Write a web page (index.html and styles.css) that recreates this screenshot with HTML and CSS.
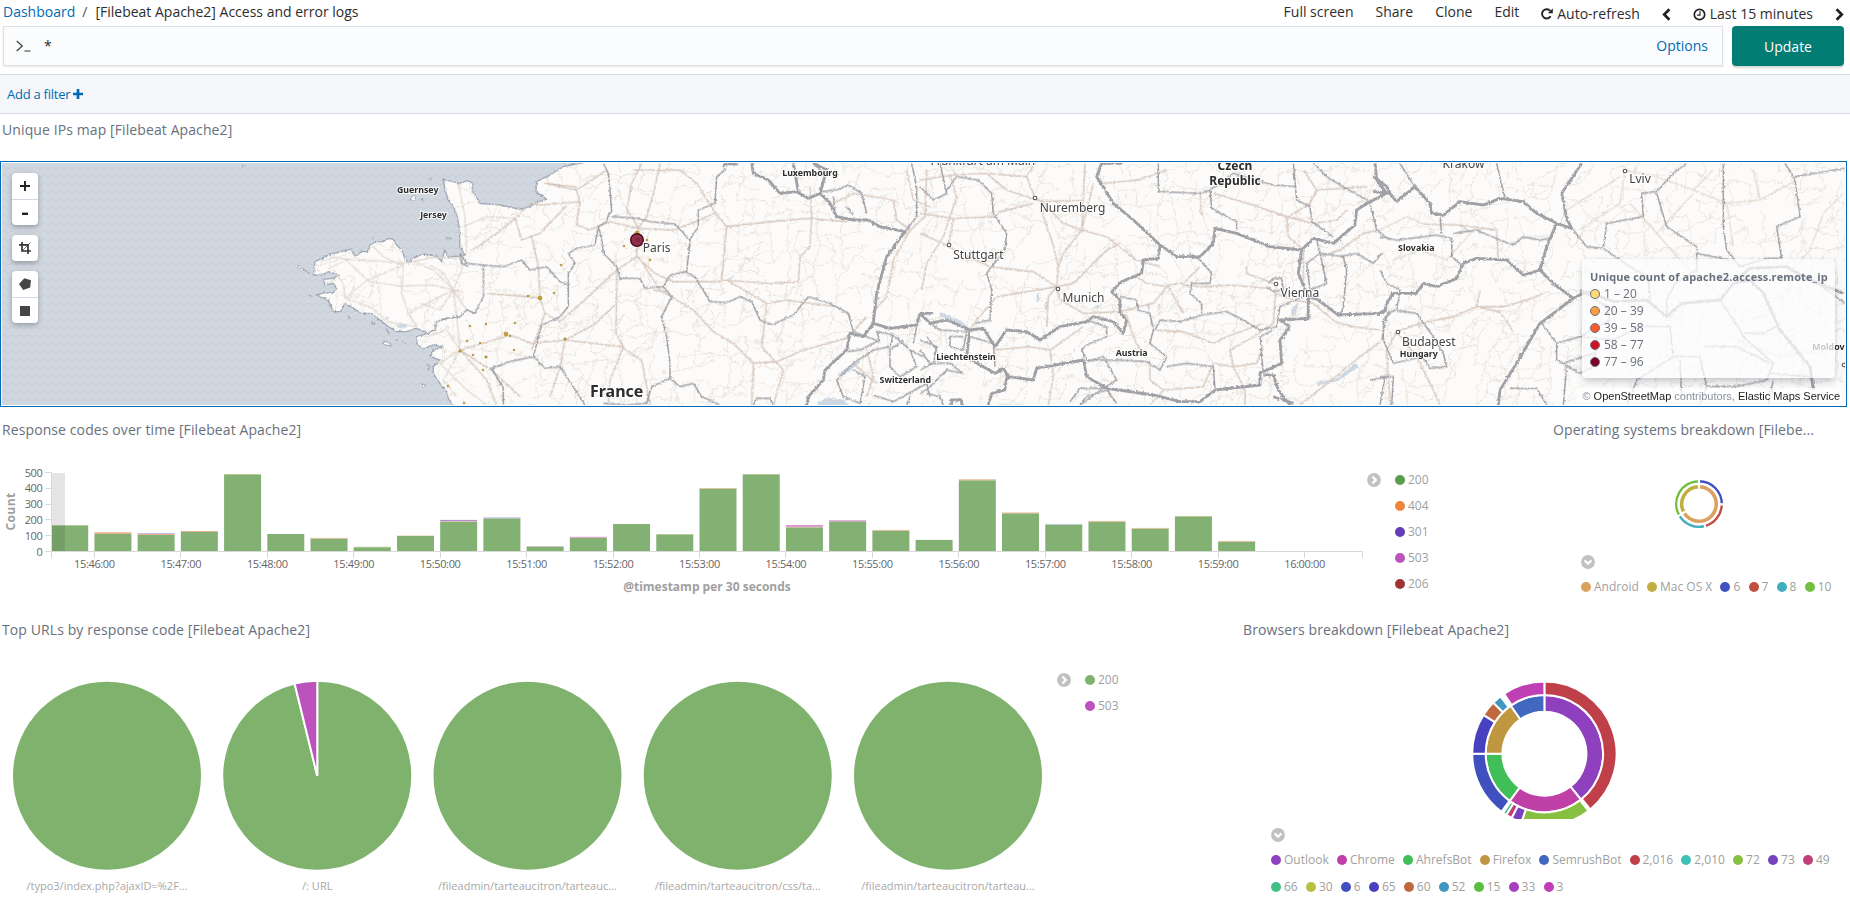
FILE: index.html
```html
<!DOCTYPE html>
<html lang="en">
<head>
<meta charset="utf-8">
<title>[Filebeat Apache2] Access and error logs</title>
<link rel="stylesheet" href="styles.css">
</head>
<body>
<header class="topbar">
  <nav class="crumbs"><a class="link">Dashboard</a><span class="slash">/</span><span>[Filebeat Apache2] Access and error logs</span></nav>
  <nav class="menu">
    <a>Full screen</a><a>Share</a><a>Clone</a><a>Edit</a>
    <a class="with-icon"><svg width="12" height="12" viewBox="0 0 12 12"><path d="M9.6 8.3A4.6 4.6 0 1 1 9.2 2.9" fill="none" stroke="#222" stroke-width="1.9"/><path d="M11.8.4v4.9H6.9z" fill="#222"/></svg>Auto-refresh</a>
    <a class="arrow"><svg width="9" height="13" viewBox="0 0 9 13"><path d="M7.4 1.2 2.2 6.5l5.2 5.3" fill="none" stroke="#222" stroke-width="2.7"/></svg></a>
    <a class="with-icon"><svg width="13" height="13" viewBox="0 0 13 13"><circle cx="6.5" cy="6.5" r="5.2" fill="none" stroke="#222" stroke-width="1.7"/><path d="M7 3.2v3.9H4" fill="none" stroke="#222" stroke-width="1.1"/></svg>Last 15 minutes</a>
    <a class="arrow"><svg width="9" height="13" viewBox="0 0 9 13"><path d="M1.6 1.2l5.2 5.3-5.2 5.3" fill="none" stroke="#222" stroke-width="2.7"/></svg></a>
  </nav>
</header>

<div class="query">
  <div class="query-input">
    <svg width="15" height="12" viewBox="0 0 15 12"><path d="M.7 1l5.6 5-5.6 5M8.5 11h6" fill="none" stroke="#333" stroke-width="1.1"/></svg>
    <span class="query-text">*</span>
    <a class="link options">Options</a>
  </div>
  <button class="update">Update</button>
</div>

<div class="filterbar"><a class="link">Add a filter</a><svg width="10" height="10" viewBox="0 0 10 10"><path d="M5 0v10M0 5h10" stroke="#006bb4" stroke-width="2.7"/></svg></div>

<section class="row row-map">
  <h2>Unique IPs map [Filebeat Apache2]</h2>
  <div class="map-frame"><div class="map">
    <svg class="map-canvas" width="1843" height="242" viewBox="2 163 1843 242">
      <defs>
        <pattern id="waves" width="8" height="8" patternUnits="userSpaceOnUse" x="0" y="5"><path d="M-1 4.2 0 3.6l4-2.2 4 2.2 1 .6" transform="translate(0 .4)" fill="none" stroke="#c8d0d9" stroke-width="1.1"/></pattern>
        <filter id="rough" filterUnits="userSpaceOnUse" x="-200" y="-100" width="6200" height="1100">
          <feTurbulence type="fractalNoise" baseFrequency=".13" numOctaves="3" seed="4"/>
          <feDisplacementMap in="SourceGraphic" scale="9" xChannelSelector="R" yChannelSelector="G"/>
        </filter>
        <path id="coast" d="M1750 38L1690 50 1650 75 1610 95 1608 125 1640 148 1615 155 1590 170 1560 178 1500 165 1440 160 1428 140 1415 120 1420 100 1400 92 1380 100 1330 88 1335 120 1345 150 1362 175 1372 200 1378 235 1380 290 1395 315 1375 318 1345 322 1335 300 1325 335 1310 318 1270 312 1240 325 1225 338 1215 325 1205 300 1190 285 1180 268 1165 265 1150 275 1130 275 1110 285 1105 305 1085 305 1065 320 1055 298 1040 300 1000 310 975 320 945 335 940 375 965 375 985 365 1015 375 1000 385 970 388 975 405 1000 400 1010 415 1000 428 975 428 950 435 985 450 1000 485 1022 485 1035 460 1060 475 1085 490 1115 490 1140 510 1165 530 1190 545 1220 545 1250 535 1285 550 1250 560 1250 580 1270 597 1300 585 1330 590 1300 600 1290 620 1320 630 1300 650 1300 670 1320 700 1340 725 1345 745 1370 780H5700V20H1800Z"/>
        <clipPath id="land"><use href="#coast" transform="translate(0 150) scale(.33333)"/></clipPath>
      </defs>
      <rect x="2" y="163" width="1843" height="242" fill="#d0d7df"/>
      <rect x="2" y="163" width="1843" height="242" fill="url(#waves)"/>
      <g transform="translate(0 150) scale(.33333)" filter="url(#rough)">
        <use href="#coast" fill="#fcfbfa" stroke="#9fa8b5" stroke-width="4"/>
        <g fill="#fcfbfa" stroke="#9fa8b5" stroke-width="3">
          <path d="M1230 148l10-12 10 4-8 12zM1286 86l10-2-4 8zM1266 146l8 2-4 6zM1338 263l14 2-10 3zM892 350l8-4 6 6-8 4zM910 358l20 14-8-8zM928 436h5v3h-5zM1044 500l10 3-8 2zM1114 516l12 6-8 3zM1148 572l20 6 6 10-22-4zM1160 535l8 16-6-4zM1184 566l8 6zM1206 574l8 6zM1280 642l10 6-3 14zM1264 702l14 3-8 5zM1114 262l6 2zM726 46l8 0-6 6z"/>
        </g>
      </g>
      <g clip-path="url(#land)"><g filter="url(#rough)"><path id="minor" fill="none" stroke="#e9e3db" stroke-width=".9"/></g></g>
      <g class="water" filter="url(#rough)" fill="#cfd8e1" transform="translate(0 150) scale(.33333)">
        <path d="M1190 528l14-8 18 4-6 12-20-2zM1358 626l10-3-2 10zM1156 498l10 4-2 8zM2235 322l18 1-2 6-14 0zM2180 390l20-14 4 3-20 14zM2455 755l30-12 45 6 20 18h-98zM2515 670l60-40 6 6-40 34-26 12zM2818 485l60 25 35 28-8 12-30-25-55-26zM3110 430h8l-2 26h-6zM3135 460l10-14-2 30-8 4zM3280 470l24-8-8 12zM3440 465l10-5-3 28zM3475 465l6 0-2 16zM3505 295l18 8-2 6zM3878 470l18-12-10 36-12 4 0-14zM3950 698l60-12 58-48 8 14-64 42-60 12zM4252 530l12-10-6 16z"/>
      </g>

      <!-- main roads -->
      <g class="roads" transform="translate(0 150) scale(.33333)" filter="url(#rough)">
        <g class="faint">
          <path d="M960 335L1005 322 1060 330 1130 332 1210 340 1300 322 1380 325M985 355L1040 330 1080 370 1110 395 1200 408 1300 405 1360 420M1035 445L1030 400 1000 360M1035 445L1110 470 1165 515 1250 530M1035 445L1100 392 1210 345 1205 430 1225 490 1250 530M1120 290L1150 320 1205 345M1360 420L1300 360 1240 335M1360 420L1330 370 1290 345M1360 420L1385 360 1385 300M1360 420L1300 450 1220 495M1360 420L1370 500 1380 600M1360 420L1400 480M1360 420L1320 480 1260 460"/>
          <path d="M1380 600L1340 540 1280 560M1380 600L1320 640 1400 720 1460 765M1380 600L1330 690 1370 740M1375 100L1395 200 1400 310M1390 230L1460 200 1545 205"/>
        </g>
        <g transform="translate(1380)">
          <path d="M0 425L-20 420M535 235L515 200 500 180 515 100 545 40M535 235L560 200 580 130 600 40M535 235L450 215 390 240 350 225 360 155 345 110 255 100 350 120 440 60M360 155L300 160 240 165 210 160 165 205 110 250 40 300M165 205L185 270 240 250 320 165M535 235L640 240 710 215 765 188 710 100 660 60 520 60M765 188L800 230 930 215 1050 205 1160 215M800 230L785 390 930 400 1015 395 1020 320 1050 290 1055 200 1050 110M535 235L530 320 585 370 640 395 785 395M530 320L470 360 385 440 300 515 255 490 240 445 205 440 80 430M470 360L468 550 495 600 545 630 570 765M535 320L600 420 700 480 760 545 820 580 880 640 875 765M465 465L400 525 315 570 215 580 150 555 0 600M315 570L300 650 270 740M315 570L490 590 450 690 445 765M240 445L235 350 215 260M0 600L100 665 180 740M0 600L80 690 110 765M255 490L215 600M920 460L905 590 970 660 940 765M870 640L950 635 1030 600 1160 565 1220 500M580 420L620 425M1235 490L1280 440 1300 330 1350 240 1395 200 1400 60M1350 240L1310 210 1300 150 1180 130 1120 160M800 390L920 460 980 450 1130 470M1340 60L1360 150 1410 170M1220 600L1240 680 1220 740M1180 640L1250 700"/>
        </g>
        <g transform="translate(2760)">
          <path d="M0 90L90 75 200 70 320 80 345 145 365 155 490 150 495 40M345 40L320 80M90 75L110 140 70 260 20 340 5 420M0 190L100 205 225 200 240 185 340 160M100 205L85 290M200 70L260 120 350 150M365 155L370 200 395 270 415 350 410 410M365 155L430 220 485 240 490 150M485 240L520 100M485 240L560 260 650 330 720 350M485 240L430 310 415 350M410 410L340 365 210 350 85 290M410 410L230 440 170 510 150 540M410 410L420 450 490 490 595 485 620 500 640 560 660 600M410 410L460 400 560 300 600 280M410 410L385 440 380 530M545 100L655 90 740 60M595 485L640 475 700 460 745 405 790 400 840 350M640 375L680 400 745 410 790 490M790 405L850 410 930 405 1050 415M1060 400L980 370 980 350M1068 410L1060 520 1000 560 930 600 940 650 1010 640 1030 590M1068 430L1120 450 1180 460 1245 515 1300 530 1380 540M700 540L790 545 880 580 920 560 1030 520M690 640L690 690 730 720 850 710 880 640 940 650 975 720 975 765M730 720L690 765M845 195L840 130M880 130L1000 165 1100 200 1180 220 1250 210 1280 180M1100 200L1105 260 1150 300 1150 400M1105 200L1170 160 1190 120 1340 110M1190 120L1150 60M1380 240L1330 250 1260 300 1200 320M220 600L330 590 390 600 400 680 385 765M390 600L490 530M1380 575L1320 620 1210 710 1140 765M0 250L90 290"/>
        </g>
        <g transform="translate(4140)">
          <path d="M50 545L120 520 220 500 290 470 360 485 400 545M290 470L300 420M290 470L370 470 440 450 490 430M50 545L20 600 30 765M50 545L110 620 160 720 180 765M130 222L240 225 350 240 355 330M240 225L270 245"/>
          <g class="faint"><path d="M735 60L720 160 600 240M735 60L830 80 940 120 1000 60M940 120L1040 160 1140 150 1250 90M1140 150L1120 60M830 250L750 160M830 250L940 130M830 250L900 330 1000 420M1330 190L1290 300 1200 400M1330 190L1390 130M0 240L80 200 130 222M40 330L120 300 200 330 280 240M720 80L560 180 540 220M1050 560L1200 620 1360 600M1040 160L1060 290"/></g>
        </g>
      </g>

      <!-- regional borders -->
      <g class="region" transform="translate(0 150) scale(.33333)" filter="url(#rough)">
        <path d="M1380 318L1385 340 1405 350M1280 550L1305 540 1310 515 1340 505 1380 500 1400 480 1425 490 1450 440 1450 345"/>
        <g transform="translate(1380)">
          <path d="M0 310L20 340 70 345 130 350 185 330 210 360 260 350 300 395 325 405 325 370 345 340 325 310 350 295 405 285 415 230 440 215 445 195 455 185 450 120 445 70 430 40M455 200L530 205 570 215 645 222 690 270 685 320 680 365 630 375 610 410 555 415 540 385 480 385 470 350 430 310 425 265 415 230M690 268L715 230 715 180 765 160 770 80 795 60 790 40M680 368L705 380 750 455 800 458 840 440 875 455 900 510 935 525 1000 495 1045 440 1110 460 1165 490 1180 545M325 400L325 470 300 500 245 525 220 620 150 635 95 655 130 715 130 765M220 620L255 655 300 650 340 710 375 765M610 410L635 440 605 500 620 560 630 640 630 685 575 710 560 760 500 765 430 760M630 685L660 710 700 700 725 740 760 755 780 765M880 765L890 745 930 745 940 765M1085 125L1130 120 1165 105 1205 130 1220 190M1125 180L1120 140M1180 195L1160 170M1355 40L1370 110 1370 200 1335 245M1060 40L1100 80"/>
          <path d="M1180 545L1260 575 1250 545 1300 555 1290 590 1240 600 1180 640 1130 690 1150 740 1200 760 1215 680 1180 660M1300 555L1350 600 1370 650 1320 680 1290 650 1290 600 1330 570M1350 600L1390 620M1370 530L1360 580M1240 735L1300 755 1400 700 1410 740M1340 765L1350 740M1260 570L1200 600 1160 605"/>
        </g>
        <g transform="translate(2760)">
          <path d="M60 40L80 130 40 150 0 110M80 120L110 80 175 90 215 130 220 190 260 250 255 300 215 350 200 370 215 420 210 510 165 520M715 40L715 125 840 130 870 120 875 175 950 215 950 240M1120 40L1130 150 1170 170 1175 215 1240 260M870 120L940 70 1060 105 1130 110M1180 40L1220 80 1270 110 1350 155M810 310L840 330 875 370 870 400 815 400 810 430 845 460 845 495 920 485 960 505 1020 540 1070 530 1080 470 1150 440M600 440L650 450 655 480 690 490 700 540 690 580 740 620 720 660 680 635 600 630 500 630 485 600 500 585 560 560 560 530 500 510M705 540L720 510 780 515 845 495M740 650L800 640 880 650 885 715M500 635L550 620 590 690 550 715 480 715 450 755M550 715L480 765M1190 270L1200 310 1270 320 1280 360 1270 470 1260 495M1200 310L1220 400 1170 420 1160 340 1200 310M1260 320L1310 310 1360 340 1385 310M1350 160L1370 240 1410 270M1380 765L1395 680M1385 570L1400 500"/>
          <path d="M30 520L60 540 140 545 130 600 90 590 90 560 130 560M0 570L50 590 40 640 0 660M0 600L30 640 90 640 130 670 80 660 20 720 0 730M150 560L220 580 225 650M20 560L50 600M1045 400L1060 385 1085 385 1090 420 1060 425 1040 410M1030 670L1020 560 1060 540M1350 690L1410 680M480 765L500 740 560 720 590 760M20 730L60 740 70 765"/>
        </g>
        <g transform="translate(4140)">
          <path d="M60 40L110 120M350 40L375 145M180 200L185 250M0 260L50 270 170 255 215 265 215 320 245 345M220 250L290 240 360 270 400 285 430 260 480 270 510 265M0 360L20 400 60 420 50 480 20 490M40 480L110 490 160 560 190 610 200 650 150 655 130 620 40 640 10 570 10 510 30 490M0 680L40 680 35 765M580 240L620 290 670 295 750 350 805 380 810 450M670 295L680 220 790 200 785 130 830 125 880 70 920 40M830 130L860 230 950 290 950 360 885 400 860 450 860 500M1030 40L1030 230 1040 300 1080 350 1160 325 1205 325 1190 230 1260 200 1245 90 1215 40M1245 80L1395 55M950 310L1050 330M600 420L680 470 690 510 600 560 700 570 740 550 770 530 870 530 880 620 770 690 740 765M485 520L530 580 600 560M530 580L530 630 600 670 640 650 650 570M390 715L470 715 500 765M560 650L550 765M880 620L960 620 980 710 1070 710 1160 690 1180 640 1090 560 1080 540 1020 450M970 590L1070 590 1170 640M1095 550L1150 550 1190 530M900 630L905 740M980 710L960 765M1180 690L1165 765M1170 670L1290 680M640 610L550 640M1300 390L1395 460"/>
        </g>
      </g>

      <!-- national borders -->
      <g class="nation" transform="translate(0 150) scale(.33333)" filter="url(#rough)">
        <g transform="translate(1380)">
          <path d="M790 42H835M875 40L880 70 925 90 960 130 1010 125 1045 145 1080 130 1110 160 1130 200 1180 210 1225 210 1260 230 1335 245 1280 320 1250 430 1240 520 1210 560 1170 550 1160 600 1095 660 1090 690 1045 740 1040 765M1000 40L1015 125M1080 130L1100 60 1060 40M1240 520L1290 535 1370 525 1380 490 1420 490"/>
        </g>
        <g transform="translate(2760)">
          <path d="M0 490L30 520 80 510 150 540 190 535 225 590 260 540 320 545 360 570 420 530 500 515 520 500 580 515 610 550 620 510 600 490 600 450 575 425 605 395 665 370 670 330 715 325 720 285 770 320 840 320 880 280 885 235 950 250 1050 290 1145 300 1180 265 1240 280 1305 225 1310 180 1350 155 1400 130 1370 90 1365 40M605 40H545L530 80 580 160 640 210 720 285M1145 300L1135 370 1165 440 1165 505 1080 510 1110 530 1080 570 1085 640 1020 670 1020 705 885 720 840 755 780 755 700 735 560 715 500 680 490 630 350 655 340 690 265 680 250 655 225 670 180 645 140 620 150 540M1165 440L1195 450 1255 495 1380 490 1400 480M1030 675L1060 675 1075 720 1110 765M260 680L255 720 215 730 205 765M95 765V750H125V765M1060 740L1120 760"/>
        </g>
        <g transform="translate(4140)">
          <path d="M-20 125L30 130 50 155 105 110 150 160 155 190 190 195 240 155 310 165 360 145 430 155 470 190 530 220 575 235 560 205 545 130 605 40M530 220L500 290 480 360 430 375 380 330 290 325 250 340 230 385 170 410 130 400 110 430 40 430 20 460 15 480-10 495M480 360L520 400 580 445 620 425 700 455 800 450 860 500 905 460 1020 450 1060 400 1110 390 1150 430 1200 540 1290 650 1300 720M580 445L520 490 480 520 410 640 360 720 355 765M1080 380L1110 355 1220 350 1290 390 1340 410 1390 430M-20 80L20 110 30 130"/>
        </g>
      </g>

      <g id="dots" fill="#c79f31" stroke="#a8822a" stroke-width=".5"></g>
      <circle cx="637" cy="240" r="6.3" fill="#93304b" stroke="#4c0a1c" stroke-width="1.4"/><circle cx="637.7" cy="240" r="1.8" fill="none" stroke="#6d1830" stroke-width=".8"/>
      <g id="cities" fill="#fff" stroke="#555" stroke-width="1.1"></g>

      <g class="city">
        <text x="642.7" y="252.3">Paris</text><text x="1039.7" y="211.7">Nuremberg</text><text x="953.2" y="258.6">Stuttgart</text><text x="1062.5" y="302">Munich</text><text x="1280.6" y="297">Vienna</text><text x="930.5" y="165">Frankfurt am Main</text><text x="1442.6" y="168.3">Krakow</text><text x="1629.2" y="183.4">Lviv</text><text x="1402" y="346">Budapest</text>
      </g>
      <g class="country">
        <text x="417.7" y="192.8">Guernsey</text><text x="433.5" y="218.4">Jersey</text><text x="810" y="176">Luxembourg</text><text x="905.3" y="382.7">Switzerland</text><text x="966" y="359.6">Liechtenstein</text><text x="1131.7" y="355.7">Austria</text><text x="1416.3" y="251">Slovakia</text><text x="1418.8" y="357">Hungary</text><text x="1831" y="349.8">Moldova</text>
        <text x="1235" y="170" class="mid">Czech</text><text x="1235" y="184.8" class="mid">Republic</text><text x="616.7" y="397.2" class="big">France</text>
      </g>
    </svg>

    <div class="map-tools">
      <div class="tool-group"><span class="tool"><svg width="10" height="10" viewBox="0 0 10 10"><path d="M5 0v10M0 5h10" stroke="#222" stroke-width="1.9"/></svg></span><span class="tool"><svg width="8" height="8" viewBox="0 0 8 8"><path d="M1 4.8h6" stroke="#222" stroke-width="2.4"/></svg></span></div>
      <div class="tool-group"><span class="tool"><svg width="12" height="12" viewBox="0 0 12 12"><path d="M3 0v9h9M0 2.8h9V12" fill="none" stroke="#333" stroke-width="1.7"/><path d="M3 9l8.5-8.5" stroke="#333" stroke-width=".7"/></svg></span></div>
      <div class="tool-group"><span class="tool"><svg width="12" height="12" viewBox="0 0 12 12"><path d="M5.3.2 12 2.3 11.2 9.4 4.2 12 0 6z" fill="#464646"/></svg></span><span class="tool"><svg width="10" height="10" viewBox="0 0 10 10"><path d="M0 0h10v10H0z" fill="#464646"/></svg></span></div>
    </div>
    <div class="map-legend">
      <b>Unique count of apache2.access.remote_ip</b>
      <div><i class="l1"></i>1 – 20</div><div><i class="l2"></i>20 – 39</div><div><i class="l3"></i>39 – 58</div><div><i class="l4"></i>58 – 77</div><div><i class="l5"></i>77 – 96</div>
    </div>
    <div class="attribution">© <a>OpenStreetMap</a> contributors, <a>Elastic Maps Service</a></div>
  </div></div>
</section>

<section class="row row-mid">
  <div class="panel panel-hist">
    <h2>Response codes over time [Filebeat Apache2]</h2>
    <div class="side-body">
      <svg id="hist" class="chart" width="1366" height="170" viewBox="0 445 1366 170"></svg>
      <span class="toggle right"></span>
      <ul class="legend vertical" data-items="200:#5c9c50|404:#ef843c|301:#663db8|503:#bc52bc|206:#9e3533"></ul>
    </div>
  </div>
  <div class="panel panel-os">
    <h2>Operating systems breakdown [Filebe...</h2>
    <svg id="os" class="chart" width="299" height="106" viewBox="1551 445 299 106"></svg>
    <span class="toggle down"></span>
    <ul class="legend" data-items="Android:#daa05d|Mac OS X:#bfaf40|6:#4050bf|7:#bf4f40|8:#40afbf|10:#70bf40"></ul>
  </div>
</section>

<section class="row row-bottom">
  <div class="panel panel-urls">
    <h2>Top URLs by response code [Filebeat Apache2]</h2>
    <div class="side-body">
      <svg id="pies" class="chart" width="1056" height="255" viewBox="0 645 1056 255"></svg>
      <span class="toggle right"></span>
      <ul class="legend vertical" data-items="200:#7eb26d|503:#bc52bc"></ul>
    </div>
  </div>
  <div class="panel panel-browsers">
    <h2>Browsers breakdown [Filebeat Apache2]</h2>
    <svg id="browsers" class="chart" width="607" height="174" viewBox="1243 645 607 174"></svg>
    <span class="toggle down"></span>
    <ul class="legend" data-items="Outlook:#8f40bf|Chrome:#bf40a7|AhrefsBot:#40bf58|Firefox:#bf9740|SemrushBot:#4068bf|2,016:#bf4048|2,010:#40bfb7|72:#87bf40|73:#7840bf|49:#bf4078"></ul>
    <ul class="legend" data-items="66:#40bf87|30:#b7bf40|6:#4050bf|65:#4840bf|60:#bf6840|52:#4097bf|15:#58bf40|33:#a740bf|3:#bf40b4"></ul>
  </div>
</section>
<script src="script.js"></script>
</body>
</html>
```
FILE: styles.css
```css
* { box-sizing: border-box; }
body { margin: 0; width: 1850px; height: 900px; overflow: hidden; background: #fff; color: #2d2d2d; font: 14px/20px "Open Sans", sans-serif; }
.link { color: #006bb4; }
h2 { margin: 0; padding-left: 2px; height: 30px; font-size: 14px; font-weight: 400; line-height: 30px; color: #69707d; letter-spacing: .1px; }

.topbar { display: flex; justify-content: space-between; height: 26px; padding: 2px 6px 0 3px; }
.slash { margin: 0 8px 0 7px; color: #555; }
.menu { display: flex; gap: 22px; }
.with-icon { display: flex; align-items: center; gap: 4px; }
.arrow { display: flex; align-items: center; }

.query { display: flex; gap: 9px; height: 48px; padding: 0 6px 8px 3px; }
.query-input { display: flex; flex: 1; align-items: center; padding: 0 14px 0 12px; border: 1px solid #dde0e4; background: #fbfcfd; box-shadow: 0 1px 2px rgba(0, 0, 0, .1); }
.query-text { flex: 1; margin-left: 13px; }
.update { width: 112px; height: 40px; border: 0; border-radius: 4px; background: #017d73; color: #fff; font: 14px "Open Sans", sans-serif; box-shadow: 0 2px 2px rgba(0, 0, 0, .15); }

.filterbar { display: flex; align-items: center; gap: 3px; height: 40px; padding-left: 7px; border-top: 1px solid #d3dae6; border-bottom: 1px solid #d3dae6; background: #f5f7fa; font-size: 13px; letter-spacing: -.25px; }

.row-map { height: 301px; padding-top: 1px; }
.row-map h2 { height: 46px; }
.map-frame { width: 1847px; height: 246px; padding: 1px; border: 1px solid #006bb4; }
.map { position: relative; height: 242px; overflow: hidden; }
.map-canvas { display: block; }
.roads { fill: none; stroke: #d3c3b9; stroke-width: 4; }
.faint { stroke: #ded6cd; stroke-width: 3.5; }
.region { fill: none; stroke: #a2a3a9; stroke-width: 4.5; }
.nation { fill: none; stroke: #a0a1a6; stroke-width: 8.5; stroke-linejoin: round; }
.city, .country { font-family: "Noto Sans", sans-serif; fill: #444; stroke: #fff; stroke-width: 2px; stroke-opacity: .85; paint-order: stroke; }
.city { font-size: 12px; }
.country { font-size: 8.8px; font-weight: 700; text-anchor: middle; fill: #2c2c2c; }
.country .mid { font-size: 12px; }
.country .big { font-size: 16px; }

.map-tools { position: absolute; left: 10px; top: 10px; display: flex; flex-direction: column; gap: 10px; }
.tool-group { border-radius: 4px; background: #fff; box-shadow: 0 2px 5px rgba(50, 60, 75, .4); }
.tool { display: flex; align-items: center; justify-content: center; width: 26px; height: 26px; }
.tool + .tool { border-top: 1px solid #d3dae6; }

.map-legend { position: absolute; left: 1580px; top: 96px; width: 253px; height: 119px; padding: 9px 8px; border-radius: 4px; background: rgba(252, 252, 253, .75); box-shadow: 0 5px 8px -2px rgba(70, 80, 95, .3), 0 0 4px rgba(70, 80, 95, .1); color: #69707d; font-size: 12px; line-height: 17.1px; }
.map-legend b { display: block; font-size: 11px; letter-spacing: .1px; white-space: nowrap; }
.map-legend div { display: flex; align-items: center; gap: 4px; height: 17.1px; }
.map-legend i { width: 10px; height: 10px; border: 1px solid; border-radius: 50%; }
.l1 { background: #fed976; border-color: #cba43c; }
.l2 { background: #feab49; background: #fd9d43; border-color: #c0680f; }
.l3 { background: #fc5b2e; border-color: #b92005; }
.l4 { background: #d41020; border-color: #900915; }
.l5 { background: #800026; border-color: #4d0017; }
.attribution { position: absolute; right: 0; bottom: 0; padding: 0 5px; background: rgba(255, 255, 255, .75); color: #8a919e; font: 11px/17px "Liberation Sans", sans-serif; }
.attribution a { color: #222; }

.row-mid, .row-bottom { display: flex; }
.row-mid { height: 200px; }
.row-bottom { height: 285px; }
.panel-hist { width: 1551px; }
.panel-os { width: 299px; }
.panel-urls { width: 1241px; }
.panel-browsers { width: 609px; }
.chart { display: block; }
.side-body { display: flex; align-items: flex-start; }
.side-body .toggle { margin: 28px 14px 0 1px; }
.side-body .legend { margin-top: 22px; }
.toggle { display: block; }
.toggle svg { display: block; }
.legend { display: flex; gap: 8.2px; margin: 0; padding: 0; list-style: none; color: #a0a0a0; font-size: 12px; line-height: 26px; }
.legend.vertical { flex-direction: column; gap: 0; }
.legend li { display: flex; align-items: center; white-space: nowrap; }
.swatch { width: 10px; height: 10px; margin-right: 3px; border-radius: 50%; }
.panel-os .toggle { margin: 4px 0 0 30px; }
.panel-os .legend { margin: 5px 0 0 30px; }
.panel-browsers { padding-left: 2px; }
.panel-browsers h2 { padding-left: 0; }
.panel-browsers .toggle { margin: 9px 0 0 28px; }
.panel-browsers .legend { margin: 5px 0 0 28px; }
.panel-browsers .legend + .legend { margin-top: 1px; }

.axis { stroke: #d9d9d9; fill: none; }
.tick { font: 11px "Open Sans", sans-serif; fill: #848484; }
.tick.dark { fill: #666; letter-spacing: -.35px; }
.title { font: 700 12px "Open Sans", sans-serif; fill: #a0a0a0; text-anchor: middle; }
.pie-label { font: 11px "Open Sans", sans-serif; fill: #a8a8a8; text-anchor: middle; }
```
FILE: script.js
```js
const $ = (id) => document.getElementById(id);

// Legends and their collapse toggles
document.querySelectorAll('.legend').forEach((ul) => {
  ul.innerHTML = ul.dataset.items.split('|').map((item) => {
    const [label, color] = item.split(':');
    return `<li><span class="swatch" style="background:${color}"></span>${label}</li>`;
  }).join('');
});
document.querySelectorAll('.toggle').forEach((t) => {
  const d = t.classList.contains('right') ? 'M5.4 3.6 8.8 7l-3.4 3.4' : 'M3.6 5.4 7 8.8l3.4-3.4';
  t.innerHTML = `<svg width="14" height="14" viewBox="0 0 14 14"><circle cx="7" cy="7" r="6.9" fill="#c1c1c1"/><path d="${d}" fill="none" stroke="#fff" stroke-width="2.2"/></svg>`;
});

// Ring segment between two angles, clockwise from twelve o'clock
function arc(cx, cy, r0, r1, a0, a1, fill, gap) {
  const p = (r, a) => {
    const t = (a - 90) * Math.PI / 180;
    return `${(cx + r * Math.cos(t)).toFixed(2)} ${(cy + r * Math.sin(t)).toFixed(2)}`;
  };
  const big = a1 - a0 > 180 ? 1 : 0;
  return `<path d="M${p(r1, a0)}A${r1} ${r1} 0 ${big} 1 ${p(r1, a1)}L${p(r0, a1)}A${r0} ${r0} 0 ${big} 0 ${p(r0, a0)}Z" fill="${fill}" stroke="#fff" stroke-width="${gap}"/>`;
}
const ring = (cx, cy, r0, r1, gap, parts) => parts.map(([a, b, c]) => arc(cx, cy, r0, r1, a, b, c, gap)).join('');

$('os').innerHTML =
  ring(1699, 504, 14.5, 20, 2, [[0, 241, '#daa05d'], [241, 360, '#bfaf40']]) +
  ring(1699, 504, 20.6, 25, 2, [[0, 91, '#4050bf'], [91, 165, '#bf4f40'], [165, 240, '#40afbf'], [240, 360, '#70bf40']]);

$('browsers').innerHTML =
  ring(1544.4, 753.7, 42, 58.7, 2, [[0, 141.5, '#8f40bf'], [141.5, 216.3, '#bf40a7'], [216.3, 270, '#40bf58'], [270, 325, '#bf9740'], [325, 360, '#4068bf']]) +
  ring(1544.4, 753.7, 58.7, 72.2, 2, [[0, 140.5, '#bf4048'], [142.5, 198.5, '#87bf40'], [198.5, 207, '#7840bf'], [207, 212, '#bf4078'], [212, 215, '#40bf87'], [216.5, 270, '#4050bf'], [270, 302.5, '#4840bf'], [302.5, 315, '#bf6840'], [315, 322.5, '#4097bf'], [326, 360, '#bf40b4']]);

// Pies
const labels = ['/typo3/index.php?ajaxID=%2F...', '/: URL', '/fileadmin/tarteaucitron/tarteauc...', '/fileadmin/tarteaucitron/css/ta...', '/fileadmin/tarteaucitron/tarteau...'];
$('pies').innerHTML = labels.map((label, i) => {
  const cx = 107 + i * 210.25, cy = 775.8;
  const shape = i === 1
    ? ring(cx, cy, 0, 95, 2, [[0, 346.2, '#7eb26d'], [346.2, 360, '#bc52bc']])
    : `<circle cx="${cx}" cy="${cy}" r="94" fill="#7eb26d"/>`;
  return shape + `<text class="pie-label" x="${cx}" y="890">${label}</text>`;
}).join('');

// Histogram: green height, then stacked [height, colour] caps
const O = '#e3b591', P = '#dc90cd', V = '#ac8fd0', L = '#c3bce6', T = '#a9bd7c';
const bars = [
  [25.6, .7, T], [17.3, 1, O, 1, '#efc3a8'], [16.3, 1, O, 1, L], [19.3, 1, O], [76.6, .7, T], [17.3], [12.6, .8, O], [4, .5, T],
  [15.3, .8, '#efe0cf'], [29.6, .6, O, 1.2, V], [33, 1, L], [4.6, .7, '#cdb7c0'], [13.6, .9, P], [27.3], [16.6, .7, T], [62.6, .7, O],
  [76.6, .7, T], [24, .5, O, 1.8, P], [30, 1, P], [20.6, .8, O], [11.4], [71, 1, O], [38, .8, O], [26.6, .8, '#b3bfd2'],
  [29.6, .8, O], [22.6, .8, O], [34.6, .7, T], [9.6, .8, O]
];
const base = 551.3;
let h = '';
bars.forEach(([g, ...caps], i) => {
  const x = 51.2 + i * 43.22;
  let y = base - g;
  h += `<rect x="${x}" y="${y}" width="37" height="${g}" fill="#83b174"/>`;
  for (let k = 0; k < caps.length; k += 2) {
    y -= caps[k];
    h += `<rect x="${x}" y="${y}" width="37" height="${caps[k]}" fill="${caps[k + 1]}"/>`;
  }
});
h += '<rect x="51" y="473" width="14" height="78" fill="#000" fill-opacity=".1"/>';
h += '<path class="axis" d="M51.5 472V558M45 551.5H1362.5V558"/>';
for (let v = 0; v <= 500; v += 100) {
  const y = 551.5 - v * .158;
  h += `<path class="axis" d="M45 ${Math.floor(y) + .5}H51"/><text class="tick dark" x="42.5" y="${y + 4}" text-anchor="end">${v}</text>`;
}
for (let m = 0; m < 15; m++) {
  const x = 94.4 + m * 86.44;
  const t = m === 14 ? '16:00:00' : `15:${46 + m}:00`;
  h += `<path class="axis" d="M${Math.floor(x) + .5} 551V558"/><text class="tick dark" x="${x}" y="568" text-anchor="middle">${t}</text>`;
}
h += '<text class="title" x="707" y="591">@timestamp per 30 seconds</text>';
h += '<text class="title" transform="translate(15 511.5) rotate(-90)" letter-spacing=".4">Count</text>';
$('hist').innerHTML = h;

// Minor road mesh: jittered grid joined to neighbouring nodes
let seed = 7;
const rnd = () => (seed = (seed * 16807) % 2147483647) / 2147483647;
const step = 15, cols = 108, rows = 19, nodes = [];
for (let r = 0; r < rows; r++) {
  nodes.push([]);
  for (let c = 0; c < cols; c++) nodes[r].push([300 + c * step + rnd() * 13, 150 + r * step + rnd() * 13]);
}
let mesh = '';
const join = (a, b) => {
  const mx = (a[0] + b[0]) / 2 + rnd() * 5 - 2.5, my = (a[1] + b[1]) / 2 + rnd() * 5 - 2.5;
  mesh += `M${a[0].toFixed(1)} ${a[1].toFixed(1)}Q${mx.toFixed(1)} ${my.toFixed(1)} ${b[0].toFixed(1)} ${b[1].toFixed(1)}`;
};
for (let r = 0; r < rows - 1; r++) {
  for (let c = 1; c < cols - 1; c++) {
    if (rnd() < .62) join(nodes[r][c], nodes[r][c + 1]);
    if (rnd() < .62) join(nodes[r][c], nodes[r + 1][c]);
    if (rnd() < .2) join(nodes[r][c], nodes[r + 1][c - 1]);
  }
}
$('minor').setAttribute('d', mesh);

// Data points and city markers
const spots = [[637, 233, 2], [647, 240, 1], [624, 246, 1], [650, 260, 1], [561, 265, 1], [540, 298, 2], [528, 296, 1], [554, 293, 1], [470, 326, 1], [486, 324, 1], [515, 323, 1], [506, 334, 2], [510, 336, 1], [467, 341, 1], [480, 343, 1], [460, 351, 1.3], [473, 355, 1], [486, 357, 1.3], [514, 350, 1], [483, 370, 1], [565, 339, 1.3], [448, 386, 1], [464, 403, 1]];
$('dots').innerHTML = spots.map(([x, y, r]) => `<circle cx="${x}" cy="${y}" r="${r}"/>`).join('');
$('cities').innerHTML = [[1035, 198], [949, 245], [1058, 289], [1276, 284], [1398, 332], [1625, 171], [1844, 365]].map(([x, y]) => `<circle cx="${x}" cy="${y}" r="1.8"/>`).join('');
```
